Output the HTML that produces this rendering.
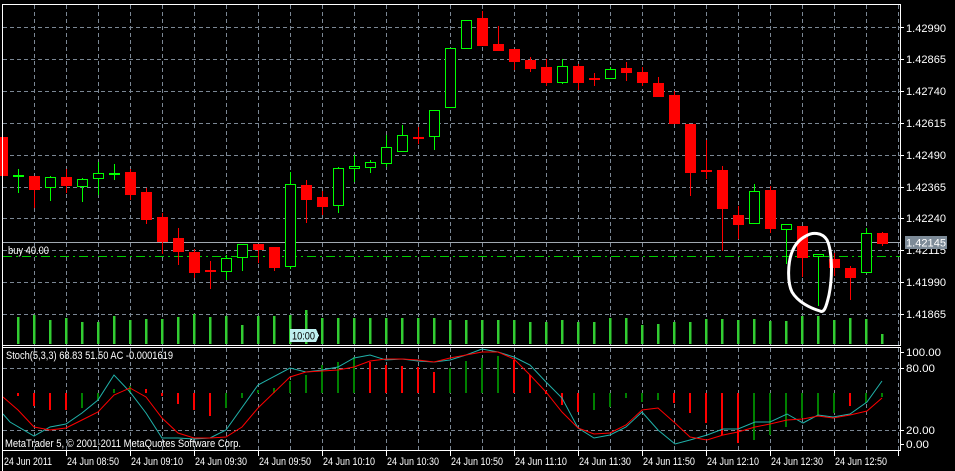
<!DOCTYPE html>
<html><head><meta charset="utf-8"><style>
html,body{margin:0;padding:0;background:#000;width:955px;height:471px;overflow:hidden}
svg{display:block}
text{font-family:"Liberation Sans",sans-serif;font-size:11px;fill:#fff}
</style></head><body>
<svg id="s" width="955" height="471" viewBox="0 0 955 471" xmlns="http://www.w3.org/2000/svg" shape-rendering="crispEdges">
<rect width="955" height="471" fill="#000"/>
<g id="grid" stroke="#7b8794" stroke-width="1" stroke-dasharray="4,3"></g>
<g id="vol" stroke="#32cd32" stroke-width="2.5"></g>
<g id="hist" stroke-width="2"></g>
<line x1="3" y1="242.5" x2="900" y2="242.5" stroke="#a0a8b0" stroke-width="1"/>
<line x1="3" y1="256.5" x2="900" y2="256.5" stroke="#00d000" stroke-width="1" stroke-dasharray="9,4,2,4"/>
<text x="8" y="254" font-size="10" textLength="41" lengthAdjust="spacingAndGlyphs">buy 40.00</text>
<g id="candles"></g>
<polyline id="cy" fill="none" stroke="#20b2aa" stroke-width="1" shape-rendering="auto"/>
<polyline id="rd" fill="none" stroke="#ff0000" stroke-width="1" shape-rendering="auto"/>
<g stroke="#fff" stroke-width="1" fill="none">
<polyline points="2.5,471 2.5,4.5 900.5,4.5 900.5,345.5"/>
<line x1="2" y1="345.5" x2="901" y2="345.5"/>
<line x1="2" y1="347.5" x2="901" y2="347.5"/>
<line x1="900.5" y1="347" x2="900.5" y2="450"/>
<line x1="2" y1="450.5" x2="901" y2="450.5"/>
</g>
<g id="ticks" stroke="#fff" stroke-width="1"></g>
<path d="M806,236 C812,232 822,232 827,240 C832,250 833,275 829,295 C826,308 824,313 820,311 C810,308 798,302 792,292 C787,282 788,262 792,252 C795,244 800,239 806,236" fill="none" stroke="#fff" stroke-width="3" shape-rendering="auto"/>
<path d="M290,329 H316 L319,335.5 L316,342 H290 Z" fill="#bff0f0"/>
<text x="292" y="339.5" font-size="10" textLength="23" lengthAdjust="spacingAndGlyphs" style="fill:#000">10:00</text>
<g>
<text x="906" y="32" textLength="40" lengthAdjust="spacingAndGlyphs">1.42990</text>
<text x="906" y="63" textLength="40" lengthAdjust="spacingAndGlyphs">1.42865</text>
<text x="906" y="95" textLength="40" lengthAdjust="spacingAndGlyphs">1.42740</text>
<text x="906" y="127" textLength="40" lengthAdjust="spacingAndGlyphs">1.42615</text>
<text x="906" y="159" textLength="40" lengthAdjust="spacingAndGlyphs">1.42490</text>
<text x="906" y="191" textLength="40" lengthAdjust="spacingAndGlyphs">1.42365</text>
<text x="906" y="222" textLength="40" lengthAdjust="spacingAndGlyphs">1.42240</text>
<text x="906" y="254" textLength="40" lengthAdjust="spacingAndGlyphs">1.42115</text>
<text x="906" y="286" textLength="40" lengthAdjust="spacingAndGlyphs">1.41990</text>
<text x="906" y="318" textLength="40" lengthAdjust="spacingAndGlyphs">1.41865</text>
<rect x="905" y="236" width="42" height="13" fill="#7d8b98"/>
<text x="906" y="246.5" textLength="40" lengthAdjust="spacingAndGlyphs">1.42145</text>
<text x="906" y="356" textLength="35" lengthAdjust="spacingAndGlyphs">100.00</text>
<text x="906" y="372" textLength="29" lengthAdjust="spacingAndGlyphs">80.00</text>
<text x="906" y="434" textLength="29" lengthAdjust="spacingAndGlyphs">20.00</text>
<text x="906" y="448" textLength="23" lengthAdjust="spacingAndGlyphs">0.00</text>
</g>
<text x="6" y="359" font-size="10" textLength="167" lengthAdjust="spacingAndGlyphs">Stoch(5,3,3) 68.83 51.50 AC -0.0001619</text>
<text x="5" y="447" font-size="10" textLength="236" lengthAdjust="spacingAndGlyphs">MetaTrader 5, © 2001-2011 MetaQuotes Software Corp.</text>
<g font-size="10">
<text x="4" y="465" textLength="48" lengthAdjust="spacingAndGlyphs">24 Jun 2011</text>
<text x="67" y="465" textLength="52" lengthAdjust="spacingAndGlyphs">24 Jun 08:50</text>
<text x="131" y="465" textLength="52" lengthAdjust="spacingAndGlyphs">24 Jun 09:10</text>
<text x="195" y="465" textLength="52" lengthAdjust="spacingAndGlyphs">24 Jun 09:30</text>
<text x="259" y="465" textLength="52" lengthAdjust="spacingAndGlyphs">24 Jun 09:50</text>
<text x="323" y="465" textLength="52" lengthAdjust="spacingAndGlyphs">24 Jun 10:10</text>
<text x="387" y="465" textLength="52" lengthAdjust="spacingAndGlyphs">24 Jun 10:30</text>
<text x="451" y="465" textLength="52" lengthAdjust="spacingAndGlyphs">24 Jun 10:50</text>
<text x="515" y="465" textLength="52" lengthAdjust="spacingAndGlyphs">24 Jun 11:10</text>
<text x="579" y="465" textLength="52" lengthAdjust="spacingAndGlyphs">24 Jun 11:30</text>
<text x="643" y="465" textLength="52" lengthAdjust="spacingAndGlyphs">24 Jun 11:50</text>
<text x="707" y="465" textLength="52" lengthAdjust="spacingAndGlyphs">24 Jun 12:10</text>
<text x="771" y="465" textLength="52" lengthAdjust="spacingAndGlyphs">24 Jun 12:30</text>
<text x="835" y="465" textLength="52" lengthAdjust="spacingAndGlyphs">24 Jun 12:50</text>
</g>
</svg>
<script>
var NS="http://www.w3.org/2000/svg";
function el(p,t,a){var e=document.createElementNS(NS,t);for(var k in a)e.setAttribute(k,a[k]);p.appendChild(e);return e;}
var g=document.getElementById('grid');
for(var x=34;x<900;x+=32){el(g,'line',{x1:x+.5,y1:5,x2:x+.5,y2:345});el(g,'line',{x1:x+.5,y1:348,x2:x+.5,y2:450});}
[27,59,91,123,155,187,218,250,282,314].forEach(function(y){el(g,'line',{x1:3,y1:y+.5,x2:900,y2:y+.5});});
[368,430].forEach(function(y){el(g,'line',{x1:3,y1:y+.5,x2:900,y2:y+.5});});
var tk=document.getElementById('ticks');
for(var x=2;x<900;x+=64){el(tk,'line',{x1:x+.5,y1:450,x2:x+.5,y2:456});}
for(var y of [27,59,91,123,155,187,218,250,282,314,352,368,430,444]){el(tk,'line',{x1:900,y1:y+.5,x2:904,y2:y+.5});}
var C=[[137,175,137,175,'r'],[175,175,169,192,'g'],[176,189,176,207,'r'],[177,187,176,200,'g'],[177,185,169,192,'r'],[179,186,178,201,'g'],[173,178,162,194,'g'],[173,173,164,179,'g'],[172,194,169,199,'r'],[192,219,188,223,'r'],[217,241,213,253,'r'],[238,251,228,264,'r'],[252,272,249,277,'r'],[270,270,261,288,'r'],[258,271,255,279,'g'],[244,257,244,270,'g'],[244,249,244,262,'r'],[247,267,247,270,'r'],[184,266,172,268,'g'],[185,199,180,222,'r'],[197,206,191,214,'r'],[168,205,167,212,'g'],[166,168,155,181,'g'],[162,167,160,172,'g'],[147,163,135,166,'g'],[135,151,125,151,'g'],[137,137,127,143,'r'],[110,136,110,149,'g'],[48,107,48,107,'g'],[20,48,20,48,'g'],[18,45,11,45,'r'],[44,50,26,50,'r'],[49,61,49,69,'r'],[60,68,57,71,'r'],[67,82,59,85,'r'],[66,82,59,83,'g'],[66,82,64,89,'r'],[78,78,73,85,'r'],[69,78,67,78,'g'],[68,72,62,80,'r'],[72,82,67,85,'r'],[83,96,77,96,'r'],[95,123,91,123,'r'],[124,172,124,195,'r'],[170,170,140,178,'r'],[170,208,166,250,'r'],[215,224,206,238,'r'],[191,223,184,223,'g'],[190,228,186,232,'r'],[224,229,224,263,'g'],[226,257,226,276,'r'],[254,256,254,305,'g'],[259,267,253,275,'r'],[268,277,266,299,'r'],[233,272,228,272,'g'],[233,243,232,245,'r']];
var cg=document.getElementById('candles');
C.forEach(function(c,k){var x=2+16*k;var col=c[4]=='g'?'#00ff00':'#ff0000';
 if(c[2]<c[0])el(cg,'line',{x1:x+.5,y1:c[2],x2:x+.5,y2:c[0],stroke:col});
 if(c[3]>c[1])el(cg,'line',{x1:x+.5,y1:c[1],x2:x+.5,y2:c[3]+1,stroke:col});
 if(c[0]==c[1]){el(cg,'rect',{x:x-5,y:c[0],width:11,height:2,fill:col});return;}
 if(c[4]=='g')el(cg,'rect',{x:x-4.5,y:c[0]+.5,width:10,height:c[1]-c[0],fill:'#000',stroke:col});
 else el(cg,'rect',{x:x-5,y:c[0],width:11,height:c[1]-c[0]+1,fill:col});
});
var V=[0,317,315,320,318,322,322,316,320,319,319,317,314,317,316,325,316,316,315,310,318,318,318,318,318,318,318,318,320,320,320,320,320,322,322,320,322,322,318,318,325,324,322,322,319,319,320,319,321,321,316,316,320,318,319,334];
var vg=document.getElementById('vol');
V.forEach(function(v,k){if(!v)return;var x=2+16*k;el(vg,'line',{x1:x,y1:v,x2:x,y2:344});});
var H=[[0,0,''],[393,396,'r'],[393,406,'r'],[393,410,'r'],[393,410,'r'],[393,408,'g'],[393,400,'g'],[389,393,'g'],[386,393,'g'],[389,393,'r'],[393,396,'r'],[393,404,'r'],[393,410,'r'],[393,416,'r'],[393,408,'g'],[393,398,'g'],[390,393,'g'],[388,393,'g'],[381,393,'g'],[375,393,'g'],[365,393,'g'],[362,393,'g'],[357,393,'g'],[362,393,'r'],[365,393,'r'],[366,393,'r'],[367,393,'r'],[372,393,'r'],[368,393,'g'],[361,393,'g'],[358,393,'g'],[356,393,'g'],[360,393,'r'],[375,393,'r'],[391,394,'r'],[393,405,'r'],[393,412,'r'],[393,410,'g'],[393,407,'g'],[393,398,'g'],[393,402,'g'],[393,400,'g'],[393,403,'r'],[393,413,'r'],[393,423,'r'],[393,435,'r'],[393,443,'r'],[393,440,'g'],[393,435,'g'],[393,427,'g'],[393,418,'g'],[393,416,'g'],[393,413,'g'],[393,406,'r'],[393,403,'g'],[393,397,'g']];
var hg=document.getElementById('hist');
H.forEach(function(h,k){if(!h[2])return;var x=2+16*k;el(hg,'line',{x1:x,y1:h[0],x2:x,y2:h[1],stroke:h[2]=='g'?'#008000':'#ff0000'});});
var cy=[[3,414],[10,422],[34,436],[50,427],[66,424],[82,413],[98,400],[114,375],[130,392],[146,413],[162,438],[178,438],[194,439],[210,438],[226,430],[258,385],[290,368],[306,372],[322,370],[338,367],[354,358],[370,355],[386,360],[402,359],[418,361],[434,362],[450,360],[466,355],[482,349],[498,352],[514,357],[530,365],[546,382],[562,398],[578,428],[594,438],[610,435],[626,427],[642,412],[658,430],[675,444],[690,440],[707,435],[723,429],[738,429],[755,422],[770,422],[787,414],[803,423],[818,415],[833,417],[850,414],[867,402],[882,381]];
var rd=[[3,397],[18,410],[34,427],[50,430],[66,428],[82,420],[98,412],[114,395],[130,388],[146,397],[162,418],[178,433],[194,438],[210,438],[226,437],[242,427],[258,408],[290,377],[306,372],[322,371],[338,370],[354,367],[370,361],[386,359],[402,359],[418,360],[434,362],[450,358],[466,355],[482,352],[498,352],[514,359],[530,375],[546,392],[562,412],[578,428],[594,434],[610,433],[626,425],[642,410],[658,408],[675,423],[690,437],[707,440],[723,435],[738,432],[755,427],[770,424],[787,420],[803,419],[818,416],[833,418],[850,415],[867,411],[882,398]];
document.getElementById('cy').setAttribute('points',cy.map(function(p){return p.join(',')}).join(' '));
document.getElementById('rd').setAttribute('points',rd.map(function(p){return p.join(',')}).join(' '));
</script>
</body></html>
